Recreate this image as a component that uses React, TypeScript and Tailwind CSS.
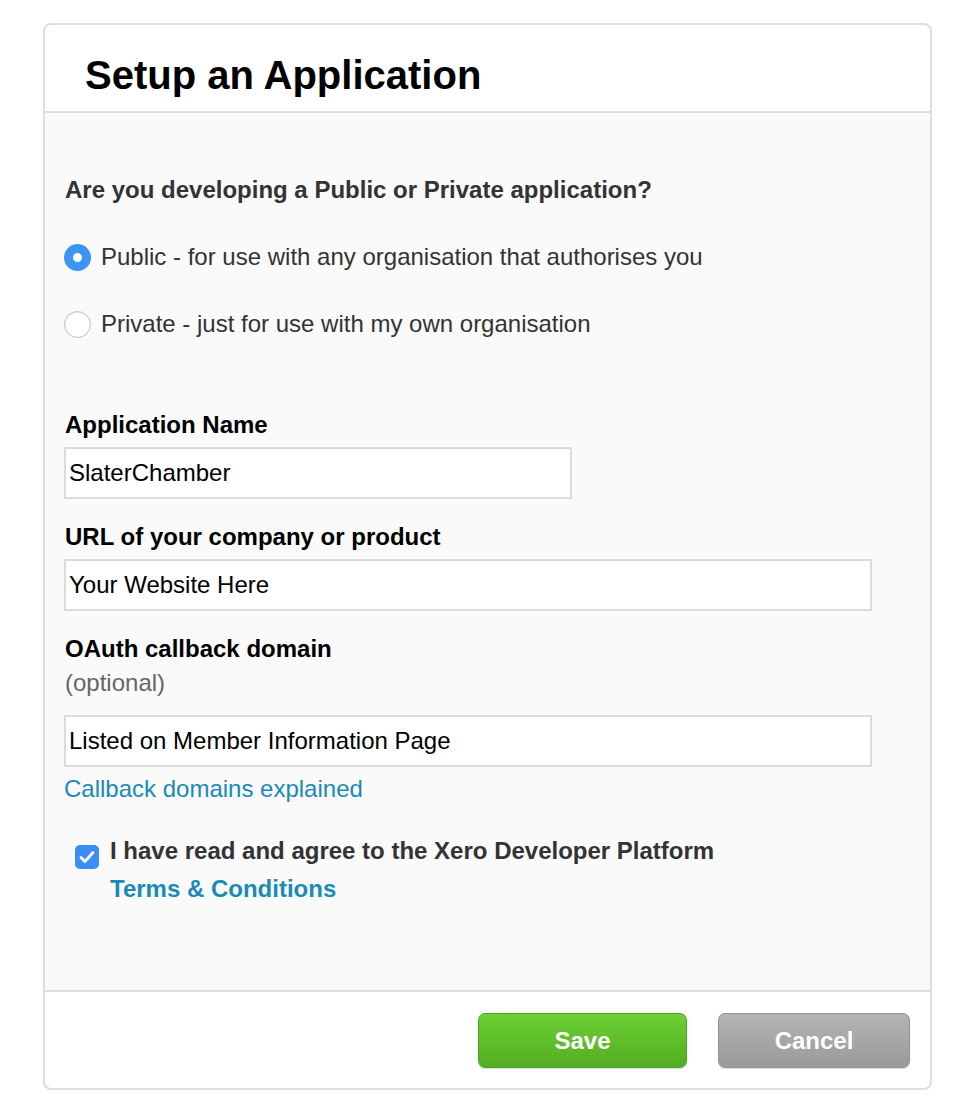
import { useState } from 'react';

const font = "font-['Liberation_Sans',Arial,sans-serif]";

function Radio({ checked, label, onClick }: { checked: boolean; label: string; onClick: () => void }) {
    return (
        <label className="flex items-center gap-[10px] cursor-pointer" onClick={onClick}>
            <span
                className={`w-[27px] h-[27px] rounded-full flex items-center justify-center shrink-0 ${checked ? 'bg-[#3c94f5]' : 'bg-white border-[1.5px] border-[#bdbdbd] shadow-[inset_0_1px_1px_rgba(0,0,0,0.08)]'}`}
            >
                {checked && <span className="w-[9px] h-[9px] rounded-full bg-white" />}
            </span>
            <span className="text-[24px] leading-[28px] text-[#333] -mt-[2px]">{label}</span>
        </label>
    );
}

function Field({ label, value, wide, children }: { label: string; value: string; wide?: boolean; children?: React.ReactNode }) {
    return (
        <div>
            <div className="text-[24px] leading-[28px] font-bold text-black pl-[1px]">{label}</div>
            {children}
            <input
                defaultValue={value}
                className={`mt-[8px] h-[52px] bg-white border-2 border-[#dcdcdc] px-[3px] text-[24px] text-black outline-none ${wide ? 'w-[808px]' : 'w-[508px]'}`}
            />
        </div>
    );
}

export default function App() {
    const [type, setType] = useState<'public' | 'private'>('public');
    const [agree, setAgree] = useState(true);

    return (
        <div className={`min-h-screen bg-white ${font} pt-[23px] pl-[43px]`}>
            <div className="w-[889px] border-2 border-[#dedede] rounded-[8px] overflow-hidden bg-white">
                {/* Header */}
                <div className="h-[88px] border-b-2 border-[#dedede] flex items-center pl-[40px]">
                    <h1 className="text-[40px] font-bold text-black leading-none mt-[14px]">Setup an Application</h1>
                </div>

                {/* Body */}
                <div className="bg-[#fafafa] pt-[63px] pb-[82px] pl-[19px]">
                    <div className="text-[24px] leading-[28px] font-bold text-[#333] pl-[1px]">
                        Are you developing a Public or Private application?
                    </div>

                    <div className="mt-[40px] flex flex-col gap-[40px]">
                        <Radio checked={type === 'public'} label="Public - for use with any organisation that authorises you" onClick={() => setType('public')} />
                        <Radio checked={type === 'private'} label="Private - just for use with my own organisation" onClick={() => setType('private')} />
                    </div>

                    <div className="mt-[73px] flex flex-col gap-[24px]">
                        <Field label="Application Name" value="SlaterChamber" />
                        <Field label="URL of your company or product" value="Your Website Here" wide />
                        <div>
                            <Field label="OAuth callback domain" value="Listed on Member Information Page" wide>
                                <div className="mt-[6px] mb-[10px] text-[24px] leading-[28px] text-[#666] pl-[1px]">(optional)</div>
                            </Field>
                            <a href="#" className="block mt-[8px] text-[24px] leading-[28px] text-[#1b8ab4]">Callback domains explained</a>
                        </div>
                    </div>

                    <div className="mt-[34px] pl-[11px] flex gap-[11px]">
                        <button
                            onClick={() => setAgree(!agree)}
                            className={`mt-[8px] w-[24px] h-[24px] rounded-[5px] flex items-center justify-center shrink-0 ${agree ? 'bg-[#3a8ef6]' : 'bg-white border border-[#bbb]'}`}
                        >
                            {agree && (
                                <svg width="16" height="14" viewBox="0 0 16 14" fill="none">
                                    <path d="M2 7.5 L6 11.5 L14 2.5" stroke="white" strokeWidth="2.8" strokeLinecap="round" strokeLinejoin="round" />
                                </svg>
                            )}
                        </button>
                        <div className="text-[24px] leading-[38px] font-bold text-[#333] -mt-[5px]">
                            I have read and agree to the Xero Developer Platform
                            <br />
                            <a href="#" className="text-[#1b8ab4]">Terms &amp; Conditions</a>
                        </div>
                    </div>
                </div>

                {/* Footer */}
                <div className="border-t-2 border-[#dedede] h-[98px] flex justify-end items-start pt-[21px] pr-[20px] gap-[31px]">
                    <button className="w-[209px] h-[55px] rounded-[7px] bg-gradient-to-b from-[#6dd135] to-[#52ad22] border border-[#4fa523] text-white text-[24px] font-bold shadow-[0_1px_1px_rgba(0,0,0,0.15)]">
                        Save
                    </button>
                    <button className="w-[192px] h-[55px] rounded-[7px] bg-gradient-to-b from-[#b4b4b4] to-[#9a9a9a] border border-[#939393] text-white text-[24px] font-bold shadow-[0_1px_1px_rgba(0,0,0,0.15)]">
                        Cancel
                    </button>
                </div>
            </div>
        </div>
    );
}
